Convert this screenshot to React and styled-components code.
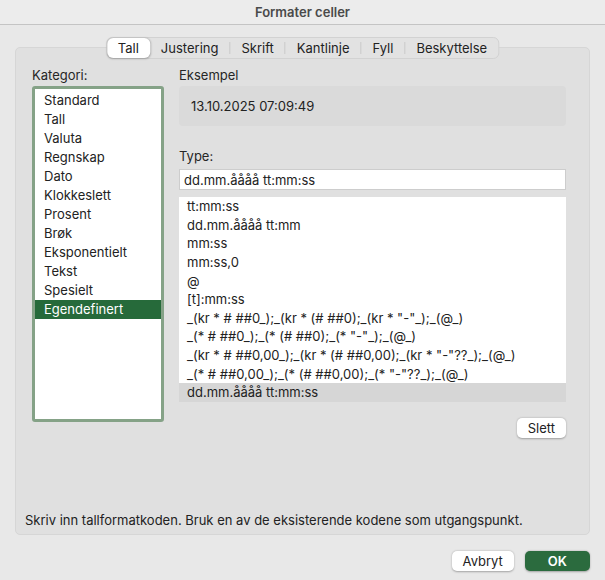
import React from 'react';
import styled, { createGlobalStyle } from 'styled-components';

const Global = createGlobalStyle`
  body { margin: 0; background: #e8e8e8; font-family: "Inter", "Liberation Sans", sans-serif; font-size: 13px; color: #222; }
`;

const Win = styled.div`
  width: 605px; height: 580px; background: #e8e8e8; display: flex; flex-direction: column;
`;

const Title = styled.div`
  height: 24px; border-bottom: 1px solid #c4c4c4; background: #ececec;
  display: flex; align-items: center; justify-content: center;
  font-weight: 600; color: #4a4a4a; font-size: 13px;
`;

const Panel = styled.div`
  position: relative; margin: 22px 15px 0 15px; height: 488px; box-sizing: border-box;
  background: #e0e0e0; border: 1px solid #d6d6d6; border-radius: 5px;
  padding: 19px 23px 0 16px; display: flex; flex-direction: column;
`;

const Tabs = styled.div`
  position: absolute; top: -11px; left: 50%; transform: translateX(-50%);
  display: flex; align-items: center; background: #e2e2e2; border: 1px solid #d2d2d2;
  border-radius: 6px; height: 20px; padding: 0;
`;

const Tab = styled.div`
  height: 20px; padding: 0 11px; display: flex; align-items: center; font-size: 13px;
  background: ${p => p.$active ? '#fff' : 'transparent'};
  border-radius: 6px; box-shadow: ${p => p.$active ? '0 0.5px 2px rgba(0,0,0,0.25)' : 'none'};
  line-height: 1;
`;

const Sep = styled.span`width: 1px; height: 12px; background: #cacaca;`;

const Body = styled.div`display: flex; gap: 15px; height: 372px;`;

const Left = styled.div`width: 132px; display: flex; flex-direction: column; gap: 4px;`;
const Right = styled.div`flex: 1; display: flex; flex-direction: column;`;

const Label = styled.div`font-size: 13px; color: #262626; height: 15px;`;

const CatList = styled.div`
  height: 336px; background: #fff; border: 3px solid #85a287; border-radius: 3px;
  padding-top: 2px; box-sizing: border-box;
`;

const CatItem = styled.div`
  height: 19px; line-height: 19px; padding-left: 9px;
  background: ${p => p.$sel ? '#266a3a' : 'transparent'};
  color: ${p => p.$sel ? '#fff' : '#222'};
`;

const Sample = styled.div`
  margin-top: 4px; height: 40px; background: #dadada; border-radius: 4px;
  display: flex; align-items: center; padding-left: 12px;
`;

const TypeLabel = styled(Label)`margin-top: 22px;`;

const Input = styled.div`
  margin-top: 6px; height: 21px; background: #fff; border: 1px solid #cdcdcd;
  display: flex; align-items: center; padding-left: 4px; box-sizing: border-box;
`;

const FmtList = styled.div`
  margin-top: 7px; height: 205px; background: #fff; box-sizing: border-box;
  display: flex; flex-direction: column; justify-content: flex-end;
`;

const FmtItem = styled.div`
  height: 19px; line-height: 19px; padding-left: 8px; white-space: nowrap; overflow: hidden;
  background: ${p => p.$sel ? '#d6d6d6' : 'transparent'};
`;

const Button = styled.div`
  height: 20px; padding: 0 ${p => p.$wide ? '23px' : '11px'}; display: flex; align-items: center; justify-content: center;
  background: ${p => p.$primary ? '#2b6b3e' : '#fff'}; color: ${p => p.$primary ? '#fff' : '#222'};
  border-radius: 5px; box-shadow: 0 0.5px 2px rgba(0,0,0,0.3); font-weight: ${p => p.$primary ? 600 : 400};
`;

const SlettRow = styled.div`display: flex; justify-content: flex-end; margin-top: 16px;`;

const Hint = styled.div`margin-top: auto; margin-bottom: 6px; margin-left: -7px; font-size: 13px;`;

const Footer = styled.div`display: flex; justify-content: flex-end; gap: 11px; padding: 16px 15px 0 0;`;

const cats = ['Standard','Tall','Valuta','Regnskap','Dato','Klokkeslett','Prosent','Brøk','Eksponentielt','Tekst','Spesielt','Egendefinert'];
const fmts = [
  'tt:mm:ss','dd.mm.åååå tt:mm','mm:ss','mm:ss,0','@','[t]:mm:ss',
  '_(kr * # ##0_);_(kr * (# ##0);_(kr * "-"_);_(@_)',
  '_(* # ##0_);_(* (# ##0);_(* "-"_);_(@_)',
  '_(kr * # ##0,00_);_(kr * (# ##0,00);_(kr * "-"??_);_(@_)',
  '_(* # ##0,00_);_(* (# ##0,00);_(* "-"??_);_(@_)',
];
const tabs = ['Tall','Justering','Skrift','Kantlinje','Fyll','Beskyttelse'];

export default function App() {
  return (
    <Win>
      <Global />
      <Title>Formater celler</Title>
      <Panel>
        <Tabs>
          {tabs.map((t, i) => (
            <React.Fragment key={t}>
              {i > 1 && <Sep />}
              <Tab $active={i === 0}>{t}</Tab>
            </React.Fragment>
          ))}
        </Tabs>
        <Body>
          <Left>
            <Label>Kategori:</Label>
            <CatList>
              {cats.map(c => <CatItem key={c} $sel={c === 'Egendefinert'}>{c}</CatItem>)}
            </CatList>
          </Left>
          <Right>
            <Label>Eksempel</Label>
            <Sample>13.10.2025 07:09:49</Sample>
            <TypeLabel>Type:</TypeLabel>
            <Input>dd.mm.åååå tt:mm:ss</Input>
            <FmtList>
              {fmts.map(f => <FmtItem key={f}>{f}</FmtItem>)}
              <FmtItem $sel>dd.mm.åååå tt:mm:ss</FmtItem>
            </FmtList>
            <SlettRow><Button>Slett</Button></SlettRow>
          </Right>
        </Body>
        <Hint>Skriv inn tallformatkoden. Bruk en av de eksisterende kodene som utgangspunkt.</Hint>
      </Panel>
      <Footer>
        <Button>Avbryt</Button>
        <Button $primary $wide>OK</Button>
      </Footer>
    </Win>
  );
}
